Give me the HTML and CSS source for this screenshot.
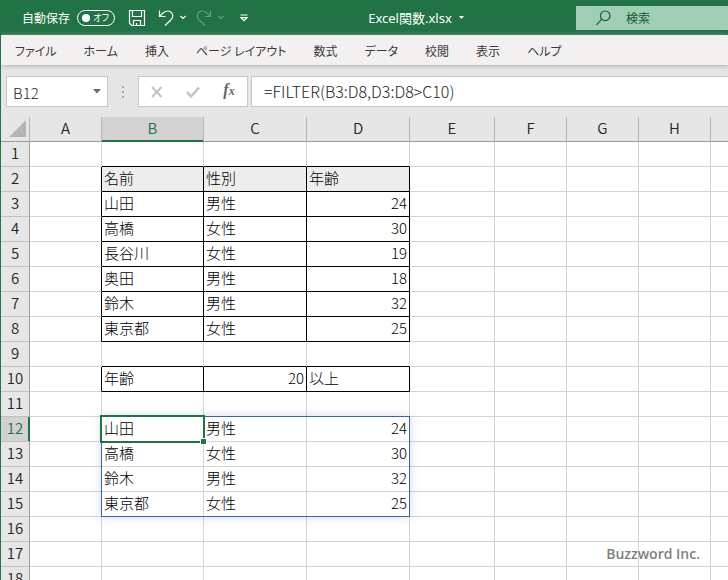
FILE: index.html
```html
<!DOCTYPE html>
<html lang="ja">
<head>
<meta charset="utf-8">
<title>Excel関数.xlsx</title>
<link rel="stylesheet" href="styles.css">
</head>
<body>
<div class="window">
  <header class="titlebar">
    <div class="quick">
      <label class="autosave" for="autosave">自動保存
        <span class="switch"><input type="checkbox" id="autosave"><span class="switch-text">オフ</span></span>
      </label>
      <button class="tool save" aria-label="上書き保存"><svg width="18" height="18" viewBox="0 0 18 18"><path d="M1.5 1.5h15v15H3.8L1.5 14.2zM4.5 1.5v6h9v-6M5.5 16.5v-5h7v5M8.5 16.5v-2.500"/></svg></button>
      <button class="tool undo" aria-label="元に戻す"><svg width="16" height="18" viewBox="0 0 16 18"><path d="M1.500 1.500v6h6M1.500 7.500L5 4c3-2.700 7-2.700 8.800 0 1.700 2.500 1 5-1 7L7 16.500"/></svg></button>
      <button class="tool more" aria-label="元に戻す履歴"><svg width="6" height="5" viewBox="0 0 6 5"><path d="M.5 1L3 3.500 5.500 1"/></svg></button>
      <button class="tool redo" aria-label="やり直し" disabled><svg width="16" height="18" viewBox="0 0 16 18"><path d="M14.500 1.500v6h-6M14.500 7.500L11 4C8 1.300 4 1.300 2.200 4c-1.700 2.500-1 5 1 7L9 16.500"/></svg></button>
      <button class="tool more" aria-label="やり直し履歴" disabled><svg width="6" height="5" viewBox="0 0 6 5"><path d="M.5 1L3 3.500 5.500 1"/></svg></button>
      <button class="tool custom" aria-label="クイック アクセス ツール バーのカスタマイズ"><svg width="8" height="8" viewBox="0 0 8 8"><path d="M.5 1h7M1 3.700h6L4 6.700z"/></svg></button>
    </div>
    <button class="filename">Excel関数.xlsx<svg width="5" height="3" viewBox="0 0 5 3"><path d="M0 0h5L2.500 3z"/></svg></button>
    <div class="search">
      <svg width="15" height="16" viewBox="0 0 15 16"><circle cx="9.200" cy="5.800" r="4.800"/><path d="M5.800 9.200L.5 14.800"/></svg>
      <input type="search" aria-label="検索" placeholder="検索">
    </div>
  </header>

  <nav class="tabs">
    <button>ファイル</button>
    <button>ホーム</button>
    <button>挿入</button>
    <button>ページ レイアウト</button>
    <button>数式</button>
    <button>データ</button>
    <button>校閲</button>
    <button>表示</button>
    <button>ヘルプ</button>
  </nav>

  <div class="formulabar">
    <div class="namebox">
      <input type="text" aria-label="名前ボックス" value="B12">
      <button aria-label="名前の一覧"><svg width="8" height="5" viewBox="0 0 8 5"><path d="M0 0h8L4 4.500z"/></svg></button>
    </div>
    <span class="grip"><i></i><i></i><i></i></span>
    <div class="actions">
      <button aria-label="キャンセル"><svg width="12" height="12" viewBox="0 0 12 12"><path class="cross" d="M1 1l9.500 10M10.500 1L1 11"/></svg></button>
      <button aria-label="入力"><svg width="14" height="12" viewBox="0 0 14 12"><path class="check" d="M1 6l4 4.500L13 1.500"/></svg></button>
      <button class="fx" aria-label="関数の挿入">f<sub>x</sub></button>
    </div>
    <input class="formula" type="text" aria-label="数式バー" value="=FILTER(B3:D8,D3:D8&gt;C10)">
  </div>

  <main class="sheet">
    <table>
      <colgroup>
        <col class="w-head"><col class="w-std"><col class="w-b"><col class="w-cd"><col class="w-cd"><col class="w-e"><col class="w-std"><col class="w-std"><col class="w-std"><col class="w-std">
      </colgroup>
      <thead>
        <tr><th class="corner"><svg width="17" height="17" viewBox="0 0 17 17"><path d="M17 0v17H0z"/></svg></th><th>A</th><th class="active">B</th><th>C</th><th>D</th><th>E</th><th>F</th><th>G</th><th>H</th><th></th></tr>
      </thead>
      <tbody>
        <tr><th>1</th><td></td><td class="kb"></td><td class="kb"></td><td class="kb"></td><td></td><td></td><td></td><td></td><td></td></tr>
        <tr class="boxed title"><th>2</th><td></td><td>名前</td><td>性別</td><td>年齢</td><td></td><td></td><td></td><td></td><td></td></tr>
        <tr class="boxed"><th>3</th><td></td><td>山田</td><td>男性</td><td class="num">24</td><td></td><td></td><td></td><td></td><td></td></tr>
        <tr class="boxed"><th>4</th><td></td><td>高橋</td><td>女性</td><td class="num">30</td><td></td><td></td><td></td><td></td><td></td></tr>
        <tr class="boxed"><th>5</th><td></td><td>長谷川</td><td>女性</td><td class="num">19</td><td></td><td></td><td></td><td></td><td></td></tr>
        <tr class="boxed"><th>6</th><td></td><td>奥田</td><td>男性</td><td class="num">18</td><td></td><td></td><td></td><td></td><td></td></tr>
        <tr class="boxed"><th>7</th><td></td><td>鈴木</td><td>男性</td><td class="num">32</td><td></td><td></td><td></td><td></td><td></td></tr>
        <tr class="boxed"><th>8</th><td></td><td>東京都</td><td>女性</td><td class="num">25</td><td></td><td></td><td></td><td></td><td></td></tr>
        <tr><th>9</th><td></td><td class="kb"></td><td class="kb"></td><td class="kb"></td><td></td><td></td><td></td><td></td><td></td></tr>
        <tr class="boxed"><th>10</th><td></td><td>年齢</td><td class="num">20</td><td>以上</td><td></td><td></td><td></td><td></td><td></td></tr>
        <tr><th>11</th><td></td><td></td><td></td><td></td><td></td><td></td><td></td><td></td><td></td></tr>
        <tr><th class="active">12</th><td></td><td class="selected">山田<span class="spill"></span><span class="cursor"></span><span class="handle"></span></td><td>男性</td><td class="num">24</td><td></td><td></td><td></td><td></td><td></td></tr>
        <tr><th>13</th><td></td><td>高橋</td><td>女性</td><td class="num">30</td><td></td><td></td><td></td><td></td><td></td></tr>
        <tr><th>14</th><td></td><td>鈴木</td><td>男性</td><td class="num">32</td><td></td><td></td><td></td><td></td><td></td></tr>
        <tr><th>15</th><td></td><td>東京都</td><td>女性</td><td class="num">25</td><td></td><td></td><td></td><td></td><td></td></tr>
        <tr><th>16</th><td></td><td></td><td></td><td></td><td></td><td></td><td></td><td></td><td></td></tr>
        <tr><th>17</th><td></td><td></td><td></td><td></td><td></td><td></td><td></td><td></td><td></td></tr>
        <tr><th>18</th><td></td><td></td><td></td><td></td><td></td><td></td><td></td><td></td><td></td></tr>
      </tbody>
    </table>
    <span class="credit">Buzzword Inc.</span>
  </main>
</div>
</body>
</html>
```
FILE: styles.css
```css
* { box-sizing: border-box; }

body {
  margin: 0;
  font-family: "Noto Sans CJK JP", sans-serif;
  color: #262626;
}

button, input {
  font: inherit;
  color: inherit;
  border: 0;
  padding: 0;
  margin: 0;
  background: none;
  min-width: 0;
  outline: 0;
}

svg { display: block; }

.window {
  display: flex;
  flex-direction: column;
  height: 100vh;
  overflow: hidden;
  border-left: 1px solid #217346;
  background: #e6e6e6;
}

/* Title bar */
.titlebar {
  flex: none;
  height: 35px;
  display: grid;
  grid-template-columns: auto 1fr auto;
  align-items: center;
  background: #217346;
  color: #fff;
  font-size: 12px;
  line-height: 16px;
}

.quick {
  display: flex;
  align-items: center;
  padding: 0 8px 0 21px;
}

.autosave {
  display: flex;
  align-items: center;
  gap: 7px;
  margin-right: 13px;
  white-space: nowrap;
}

.switch {
  display: flex;
  align-items: center;
  justify-content: space-between;
  width: 38px;
  height: 16px;
  padding: 0 5px 0 4px;
  border: 1px solid #fff;
  border-radius: 8px;
  font-size: 9px;
  font-feature-settings: "palt";
}

.switch input {
  appearance: none;
  width: 8px;
  height: 8px;
  border-radius: 50%;
  background: #fff;
}

.tool svg { fill: none; stroke: #fff; stroke-width: 1.2; }
.tool:disabled { opacity: 0.3; }
.undo, .redo { margin-left: 12px; }
.more { margin-left: 6px; }
.redo { margin-left: 10px; }
.custom { margin-left: 16px; }

.filename {
  display: flex;
  align-items: center;
  justify-self: center;
  gap: 7px;
  font-family: "Noto Sans", "Noto Sans CJK JP", sans-serif;
  font-size: 13px;
}
.filename svg { fill: #fff; }

.search {
  display: flex;
  align-items: center;
  gap: 15px;
  width: 152px;
  height: 24px;
  padding-left: 20px;
  background: #a0cdb4;
  color: #0f5c31;
}
.search svg { flex: none; fill: none; stroke: #0f5c31; stroke-width: 1.2; }
.search input { flex: 1; }
.search input::placeholder { color: #0f5c31; opacity: 1; }

/* Ribbon tabs */
.tabs {
  flex: none;
  display: flex;
  gap: 27px;
  height: 30px;
  padding-left: 14px;
  background: #f3f1f0;
  box-shadow: 0 1px 5px #aaa;
  font-size: 12px;
  color: #3b3a39;
  font-feature-settings: "palt";
  white-space: nowrap;
}

/* Formula bar */
.formulabar {
  flex: none;
  display: flex;
  height: 31px;
  margin: 11px 0 10px;
  padding-left: 5px;
  font-size: 15px;
  font-weight: 300;
}

.namebox, .actions, .formula {
  border: 1px solid #c6c6c6;
  background: #fff;
}

.namebox {
  display: flex;
  width: 102px;
  padding: 2px 6px 0;
}
.namebox input { flex: 1; }
.namebox button { padding-bottom: 3px; }
.namebox svg { fill: #6a6a6a; }

.grip {
  display: flex;
  flex-direction: column;
  justify-content: center;
  align-items: center;
  gap: 3px;
  width: 30px;
}
.grip i { width: 2px; height: 2px; background: #ababab; }

.actions {
  display: grid;
  grid-template-columns: repeat(3, 1fr);
  width: 110px;
}
.actions button { display: flex; align-items: center; justify-content: center; }
.actions svg { fill: none; stroke: #c4c4c4; stroke-width: 2; }
.actions .check { stroke-width: 2.5; }
.actions .fx {
  align-items: baseline;
  font: italic bold 16px/25px "Liberation Serif", serif;
  color: #666;
}
.fx sub { font-size: 12px; line-height: 1; vertical-align: baseline; }

.formula {
  flex: 1;
  margin-left: 3px;
  padding: 0 12px 2px;
  border-right: 0;
  font-size: 16px;
}

/* Sheet */
.sheet {
  position: relative;
  flex: 1;
  min-height: 0;
  overflow: hidden;
  background: #fff;
}

table {
  table-layout: fixed;
  width: 0;
  border-collapse: separate;
  border-spacing: 0;
  font-size: 15px;
  line-height: 22px;
}

.w-head { width: 29px; }
.w-std { width: 72px; }
.w-b { width: 102px; }
.w-cd { width: 103px; }
.w-e { width: 85px; }

th, td {
  height: 25px;
  padding: 0 0 2px;
  white-space: nowrap;
}

td {
  padding: 0 2px 2px;
  border: solid #d4d4d4;
  border-width: 0 1px 1px 0;
  text-align: left;
  font-weight: 300;
  color: #000;
}
td.num { text-align: right; }

th {
  background: #e6e6e6;
  border: solid #c0c0c0;
  border-width: 0 1px 1px 0;
  font-weight: 350;
}
tbody th { border-right-color: #9b9b9b; }
thead th { border-right-color: #b5b5b5; border-bottom-color: #9b9b9b; }
th.active { background: #d2d2d2; color: #217346; }
thead th.active { box-shadow: inset 0 -1px #217346; border-bottom-color: #217346; }
tbody th.active { box-shadow: inset -1px 0 #217346; border-right-color: #217346; }

.corner svg { margin: 0 3px 0 auto; fill: #b4b4b4; }

.kb { border-bottom-color: #000; }
.boxed td:nth-child(2) { border-right-color: #000; }
.boxed td:nth-child(n+3):nth-child(-n+5) { border-color: #000; }
.title td:nth-child(n+3):nth-child(-n+5) { background: #ededed; }

/* Selected cell and the range its formula fills */
.selected { position: relative; }

.spill {
  position: absolute;
  top: -1px;
  left: -1px;
  width: 309px;
  height: 101px;
  border: 1px solid #3a66a0;
  box-shadow: 0 0 10px rgba(70, 120, 180, 0.25);
}

.cursor {
  position: absolute;
  inset: -2px;
  border: 2px solid #217346;
}

.handle {
  position: absolute;
  right: -4px;
  bottom: -4px;
  width: 7px;
  height: 7px;
  border: 1px solid #fff;
  background: #217346;
}

.credit {
  position: absolute;
  right: 28px;
  bottom: 16px;
  font: 600 14px/20px "Open Sans", "Noto Sans", sans-serif;
  color: #808080;
}
```
